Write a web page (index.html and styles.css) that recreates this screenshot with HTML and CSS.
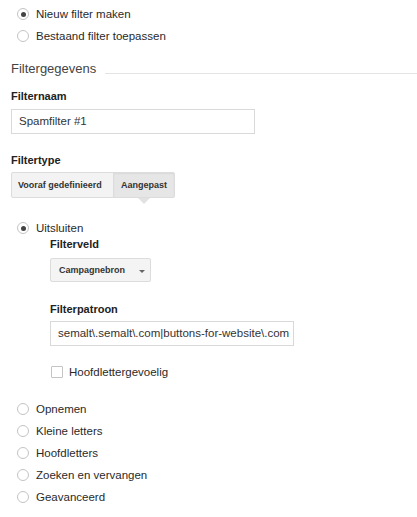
FILE: index.html
```html
<!DOCTYPE html>
<html>
<head>
<meta charset="utf-8">
<link rel="stylesheet" href="styles.css">
</head>
<body>
<div class="page">
  <div class="radio-list top-list">
    <label class="radio-row"><span class="radio checked"></span><span>Nieuw filter maken</span></label>
    <label class="radio-row"><span class="radio"></span><span>Bestaand filter toepassen</span></label>
  </div>

  <div class="section-head"><span class="section-title">Filtergegevens</span><span class="section-line"></span></div>

  <div class="field-label name-label">Filternaam</div>
  <div class="text-input name-input">Spamfilter #1</div>

  <div class="field-label type-label">Filtertype</div>
  <div class="btn-group">
    <div class="seg-btn first">Vooraf gedefinieerd</div>
    <div class="seg-btn active">Aangepast</div>
  </div>

  <label class="radio-row exclude-row"><span class="radio checked"></span><span>Uitsluiten</span></label>
  <div class="sub-block">
    <div class="field-label">Filterveld</div>
    <div class="dropdown"><span>Campagnebron</span><span class="caret"></span></div>
    <div class="field-label pattern-label">Filterpatroon</div>
    <div class="text-input pattern-input">semalt\.semalt\.com|buttons-for-website\.com</div>
    <label class="check-row"><span class="checkbox"></span><span>Hoofdlettergevoelig</span></label>
  </div>

  <div class="radio-list bottom-list">
    <label class="radio-row"><span class="radio"></span><span>Opnemen</span></label>
    <label class="radio-row"><span class="radio"></span><span>Kleine letters</span></label>
    <label class="radio-row"><span class="radio"></span><span>Hoofdletters</span></label>
    <label class="radio-row"><span class="radio"></span><span>Zoeken en vervangen</span></label>
    <label class="radio-row"><span class="radio"></span><span>Geavanceerd</span></label>
  </div>
</div>
</body>
</html>
```

FILE: styles.css
```css
html, body {
  margin: 0;
  padding: 0;
  background: #fff;
}
body {
  font-family: "Liberation Sans", Arial, sans-serif;
  font-size: 11.5px;
  color: #2a2a2a;
}
.page {
  padding-left: 11px;
}
.radio-list {
  display: flex;
  flex-direction: column;
}
.top-list {
  padding-top: 3px;
}
.radio-row {
  display: flex;
  align-items: center;
  height: 22px;
  padding-left: 6px;
  gap: 7px;
  line-height: 16px;
}
.radio {
  box-sizing: border-box;
  width: 12px;
  height: 12px;
  border: 1px solid #c4c4c4;
  border-radius: 50%;
  display: flex;
  align-items: center;
  justify-content: center;
  background: #fff;
}
.radio.checked::after {
  content: "";
  width: 5px;
  height: 5px;
  border-radius: 50%;
  background: #444;
}
.section-head {
  display: flex;
  margin-top: 14px;
  line-height: 16px;
}
.section-title {
  font-size: 13px;
  color: #444;
}
.section-line {
  flex: 1;
  height: 1px;
  background: #e3e3e3;
  margin-top: 12px;
  margin-left: 9px;
}
.field-label {
  font-weight: bold;
  font-size: 11px;
  line-height: 14px;
  color: #222;
}
.name-label {
  margin-top: 12px;
}
.text-input {
  box-sizing: border-box;
  width: 244px;
  height: 25px;
  border: 1px solid #d9d9d9;
  line-height: 23px;
  padding-left: 7px;
  font-size: 11.5px;
  color: #333;
  white-space: nowrap;
  overflow: hidden;
}
.name-input {
  margin-top: 6px;
}
.type-label {
  margin-top: 19px;
}
.btn-group {
  display: flex;
  margin-top: 5px;
  width: max-content;
  border: 1px solid #dcdcdc;
  border-radius: 2px;
  background: #f3f3f3;
}
.seg-btn {
  position: relative;
  box-sizing: border-box;
  height: 24px;
  line-height: 24px;
  font-size: 9px;
  font-weight: bold;
  color: #333;
  text-align: center;
  white-space: nowrap;
}
.seg-btn.first {
  width: 102px;
  text-align: left;
  padding-left: 6px;
  border-right: 1px solid #dcdcdc;
}
.seg-btn.active {
  width: 60px;
  background: #e6e6e6;
  box-shadow: inset 0 1px 2px rgba(0, 0, 0, 0.06);
}
.seg-btn.active::after {
  content: "";
  position: absolute;
  left: 50%;
  top: 25px;
  margin-left: -6px;
  border-left: 6px solid transparent;
  border-right: 6px solid transparent;
  border-top: 6px solid #e2e2e2;
}
.exclude-row {
  height: 18px;
  margin-top: 21px;
}
.sub-block {
  padding-left: 39px;
}
.dropdown {
  box-sizing: border-box;
  display: flex;
  align-items: center;
  width: 101px;
  height: 24px;
  margin-top: 7px;
  padding-left: 8px;
  border: 1px solid #dcdcdc;
  border-radius: 2px;
  background: #f4f4f4;
  font-size: 9px;
  font-weight: bold;
  color: #333;
  white-space: nowrap;
}
.caret {
  margin-left: 14px;
  margin-top: 2px;
  border-left: 3px solid transparent;
  border-right: 3px solid transparent;
  border-top: 3px solid #666;
}
.pattern-label {
  margin-top: 20px;
}
.pattern-input {
  margin-top: 5px;
  padding-left: 7px;
}
.check-row {
  display: flex;
  align-items: center;
  gap: 6px;
  height: 18px;
  margin-top: 17px;
  padding-left: 1px;
  line-height: 16px;
}
.checkbox {
  box-sizing: border-box;
  width: 12px;
  height: 12px;
  border: 1px solid #c4c4c4;
  border-radius: 1px;
  background: #fff;
}
.bottom-list {
  margin-top: 17px;
}
```
